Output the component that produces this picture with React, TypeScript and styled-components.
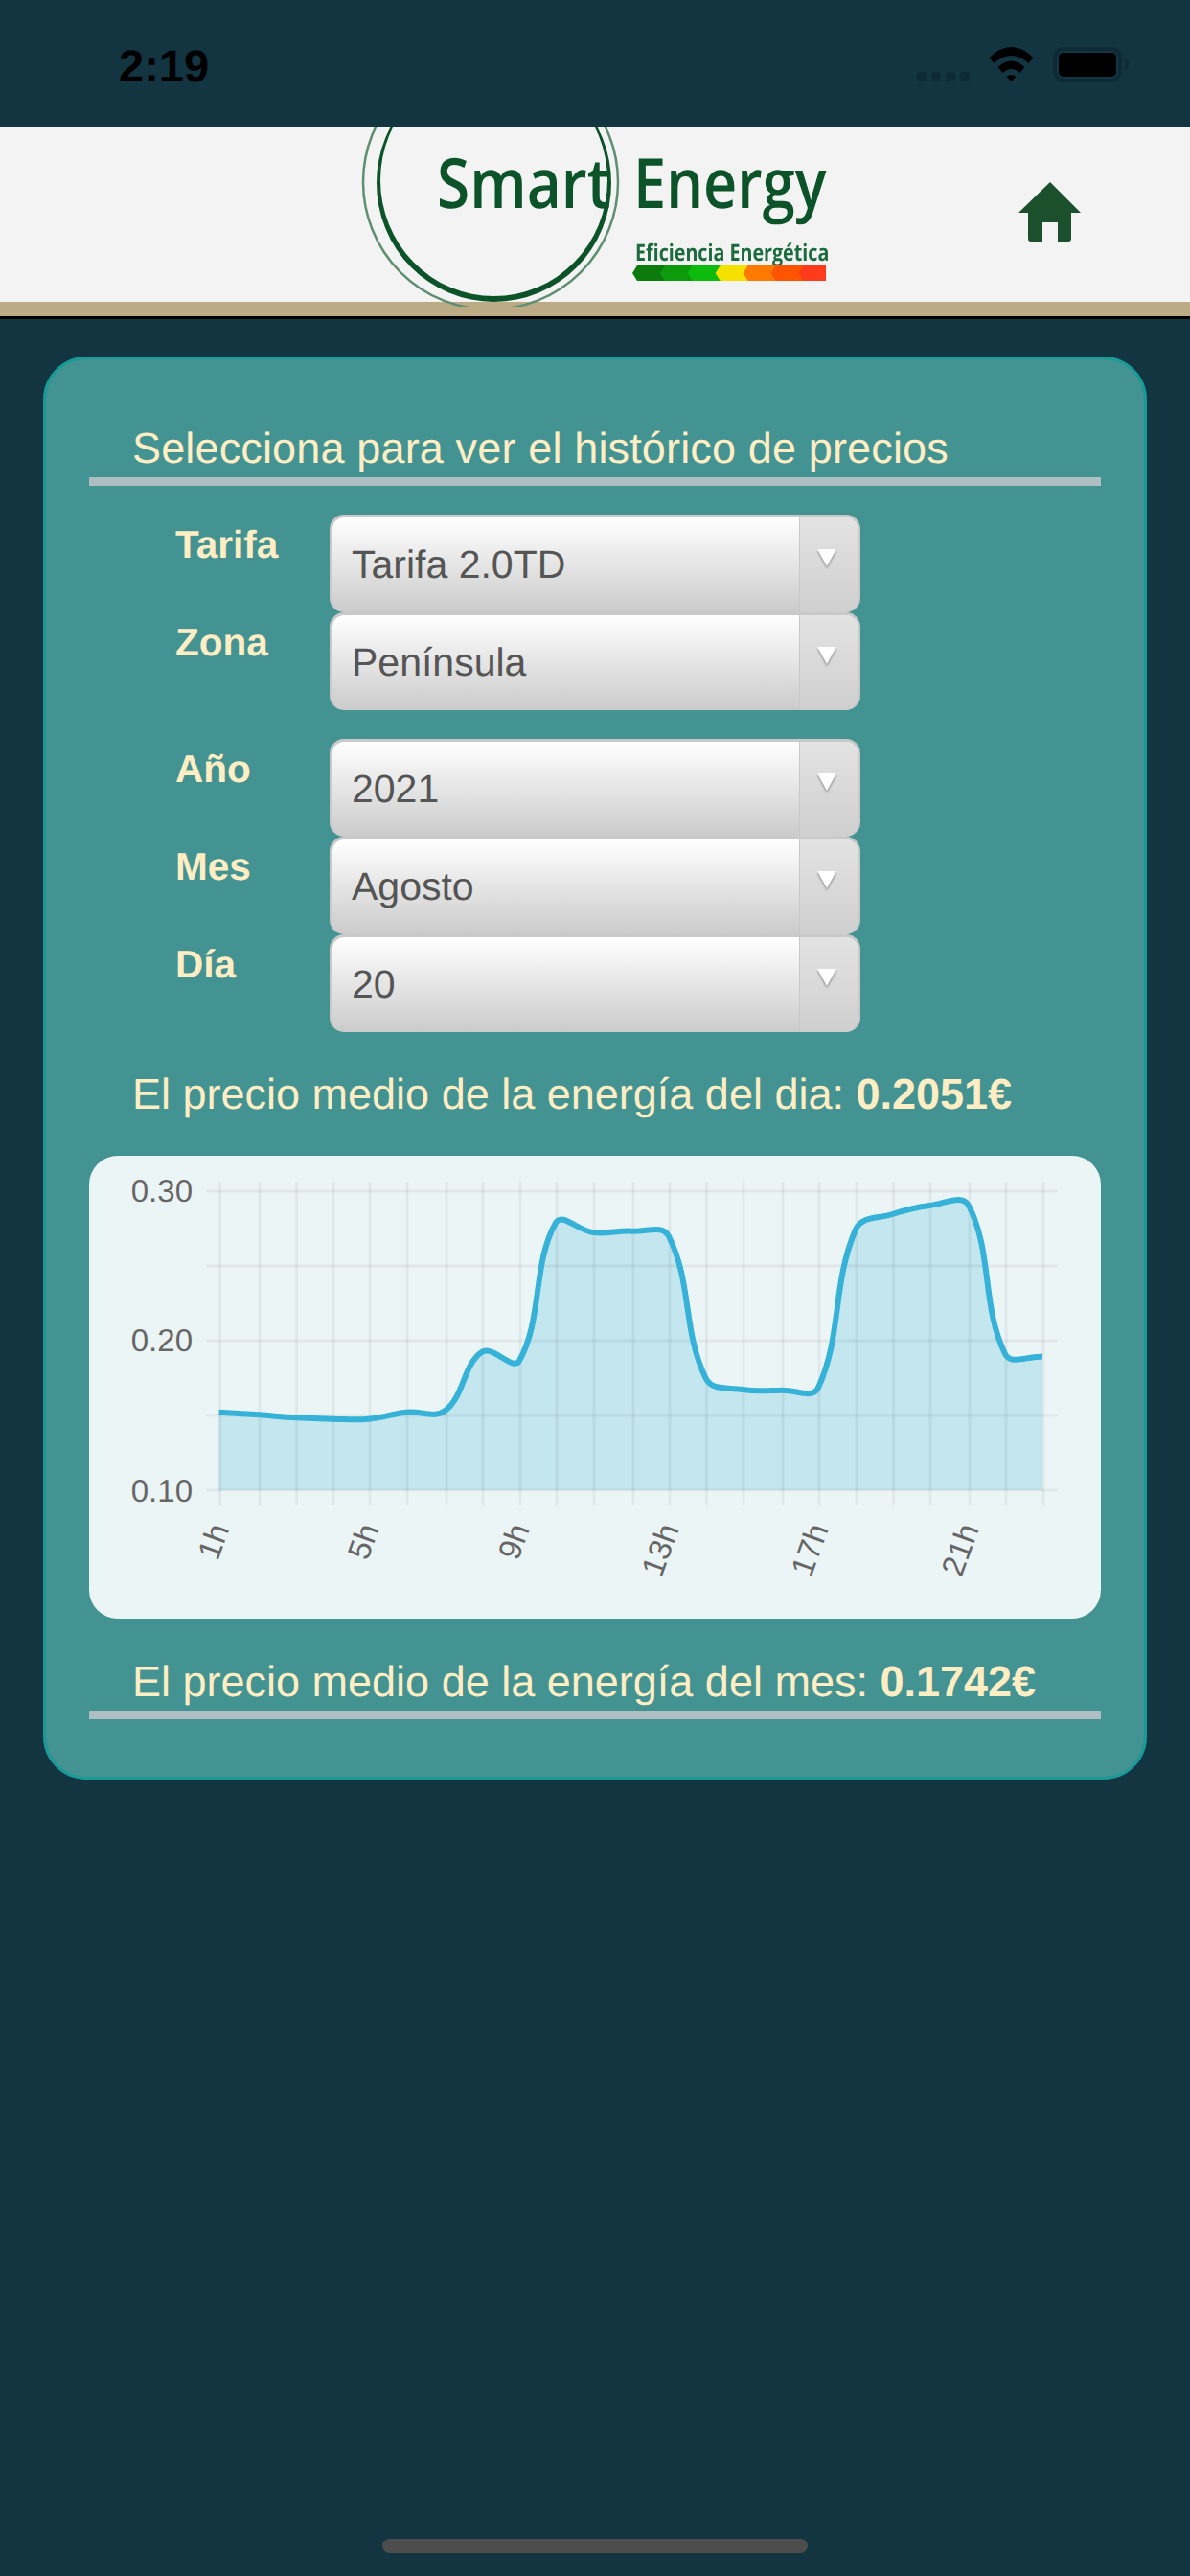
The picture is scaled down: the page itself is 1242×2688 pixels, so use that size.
import * as React from "react"
import styled, { createGlobalStyle } from "styled-components"

const GlobalStyle = createGlobalStyle`
  html, body {
    margin: 0;
    padding: 0;
    background: #133441;
  }
  body {
    font-family: "Liberation Sans", Arial, sans-serif;
    text-rendering: geometricPrecision;
  }
  * {
    box-sizing: border-box;
  }
`

const firstGroup = [
  { label: "Tarifa", value: "Tarifa 2.0TD" },
  { label: "Zona", value: "Península" },
]
const secondGroup = [
  { label: "Año", value: "2021" },
  { label: "Mes", value: "Agosto" },
  { label: "Día", value: "20" },
]

const energyColors = ["#0a7a0a", "#0b9a0b", "#07bb07", "#f5e000", "#ff7a00", "#ff5500", "#ff3a1c"]

// chart geometry, in page pixels (the svg viewBox uses the same numbers)
const gridX = [229.6, 271, 309.6, 348, 386, 425, 466, 504, 543, 581, 620, 661, 699, 737.5, 776, 817, 855, 894, 932.5, 971, 1012, 1050, 1089]
const gridY = [1243, 1321, 1399, 1477, 1555]
const plotY = [1473.7, 1476.3, 1479.3, 1480.7, 1480.7, 1473.7, 1471.7, 1410.7, 1420, 1276, 1286, 1284.7, 1290, 1438, 1450, 1450.7, 1448, 1283, 1267, 1258, 1258, 1412.7, 1415.7]
const yTicks = [
  { label: "0.30", y: 1254 },
  { label: "0.20", y: 1410 },
  { label: "0.10", y: 1567 },
]
const xTicks = [
  { label: "1h", index: 0 },
  { label: "5h", index: 4 },
  { label: "9h", index: 8 },
  { label: "13h", index: 12 },
  { label: "17h", index: 16 },
  { label: "21h", index: 20 },
]

const points = plotY.map((y, i) => ({ x: gridX[i] - 1, y }))

// same spline as chart.js line charts
function linePath(pts: { x: number; y: number }[], tension = 0.4) {
  const ctrl = pts.map((p, i) => {
    const prev = pts[i - 1] || p
    const next = pts[i + 1] || p
    const d01 = Math.hypot(p.x - prev.x, p.y - prev.y)
    const d12 = Math.hypot(next.x - p.x, next.y - p.y)
    const total = d01 + d12 || 1
    const fa = (tension * d01) / total
    const fb = (tension * d12) / total
    return {
      inX: p.x - fa * (next.x - prev.x),
      inY: p.y - fa * (next.y - prev.y),
      outX: p.x + fb * (next.x - prev.x),
      outY: p.y + fb * (next.y - prev.y),
    }
  })
  let d = `M${pts[0].x} ${pts[0].y}`
  for (let i = 1; i < pts.length; i++) {
    d += ` C${ctrl[i - 1].outX} ${ctrl[i - 1].outY} ${ctrl[i].inX} ${ctrl[i].inY} ${pts[i].x} ${pts[i].y}`
  }
  return d
}

function StatusIcons() {
  return (
    <svg width="222" height="37" viewBox="957 49 222 37">
      {[957, 972, 987, 1002].map((x) => (
        <rect key={x} x={x} y="75" width="10" height="10" rx="3.5" fill="#0e2a36" />
      ))}
      <g transform="translate(1031.5 49)" fill="#000">
        <path d="M1 11 Q24 -11 47 11 L42 17 Q24 1 6 17 Z" />
        <path d="M10 21 Q24 8 38 21 L33 27 Q24 19 15 27 Z" />
        <path d="M19 31 Q24 27 29 31 L24 36 Z" />
      </g>
      <rect x="1101" y="51" width="68" height="33" rx="9" fill="none" stroke="#0e2a36" strokeWidth="4" />
      <rect x="1105" y="55" width="60" height="25" rx="5" fill="#000" />
      <path d="M1174 61 Q1178 63 1178 67.5 Q1178 72 1174 74 Z" fill="#0e2a36" />
    </svg>
  )
}

function Logo() {
  return (
    <LogoMark viewBox="370 132 520 188">
      <defs>
        <filter id="soft" x="-5%" y="-5%" width="110%" height="110%">
          <feGaussianBlur stdDeviation="0.7" />
        </filter>
      </defs>
      <g filter="url(#soft)">
        <circle cx="512" cy="190" r="133" fill="none" stroke="#5f8f72" strokeWidth="2.5" />
        <path
          fillRule="evenodd"
          fill="#0b5229"
          d="M393 191 a122.5 124 0 1 0 245 0 a122.5 124 0 1 0 -245 0 Z M397 188 a118.5 121 0 1 0 237 0 a118.5 121 0 1 0 -237 0 Z"
        />
        <LogoText transform="translate(456 217) scale(0.865 1)" fontSize="72">
          Smart
        </LogoText>
        <LogoText transform="translate(661 217) scale(0.85 1)" fontSize="72">
          Energy
        </LogoText>
        <LogoSmallText transform="translate(663 272) scale(0.82 1)" fontSize="24">
          Eficiencia Energética
        </LogoSmallText>
        {energyColors.map((color, i) => {
          const left = 660 + i * 28.9
          return (
            <polygon
              key={color}
              fill={color}
              points={`${left + 5},277 862,277 862,293 ${left + 5},293 ${left},285`}
            />
          )
        })}
      </g>
    </LogoMark>
  )
}

function HomeIcon() {
  return (
    <svg width="65" height="62" viewBox="1063 190 65 62">
      <path
        fill="#1c4f2b"
        d="M1096 190 L1128 222 L1118 222 L1118 249 Q1118 252 1115 252 L1104 252 L1104 232 L1088 232 L1088 252 L1076 252 Q1073 252 1073 249 L1073 222 L1063 222 Z"
      />
    </svg>
  )
}

function Chart() {
  const line = linePath(points)
  const first = points[0]
  const last = points[points.length - 1]
  return (
    <ChartCard>
      <svg width="1056" height="483" viewBox="93 1206 1056 483" style={{ display: "block" }}>
        <path d={`${line} L${last.x} 1555 L${first.x} 1555 Z`} fill="#36b2d8" fillOpacity="0.22" />
        {gridY.map((y) => (
          <line key={y} x1="215" x2="1104" y1={y} y2={y} stroke="#000" strokeOpacity="0.05" strokeWidth="3" />
        ))}
        {gridX.map((x) => (
          <line key={x} x1={x} x2={x} y1="1233" y2="1570" stroke="#000" strokeOpacity="0.05" strokeWidth="3" />
        ))}
        <path d={line} fill="none" stroke="#36b2d8" strokeWidth="6" />
        {yTicks.map((t) => (
          <TickText key={t.label} x="201" y={t.y} textAnchor="end">
            {t.label}
          </TickText>
        ))}
        {xTicks.map((t) => {
          const x = gridX[t.index] + 10
          return (
            <TickText key={t.label} x={x} y="1595" textAnchor="end" transform={`rotate(-70 ${x} 1595)`}>
              {t.label}
            </TickText>
          )
        })}
      </svg>
    </ChartCard>
  )
}

function SelectRow({ label, value }: { label: string; value: string }) {
  return (
    <Row>
      <RowLabel>{label}</RowLabel>
      <SelectBox>
        <SelectValue>{value}</SelectValue>
        <ArrowBox>
          <Arrow />
        </ArrowBox>
      </SelectBox>
    </Row>
  )
}

export default function App() {
  return (
    <Page>
      <GlobalStyle />
      <StatusBar>
        <Clock>2:19</Clock>
        <StatusIcons />
      </StatusBar>
      <Header>
        <Logo />
        <HomeIcon />
      </Header>
      <Panel>
        <SectionTitle>Selecciona para ver el histórico de precios</SectionTitle>
        <Group>
          {firstGroup.map((row) => (
            <SelectRow key={row.label} {...row} />
          ))}
        </Group>
        <Group>
          {secondGroup.map((row) => (
            <SelectRow key={row.label} {...row} />
          ))}
        </Group>
        <PriceLine>
          El precio medio de la energía del dia: <b>0.2051€</b>
        </PriceLine>
        <Chart />
        <FooterLine>
          El precio medio de la energía del mes: <b>0.1742€</b>
        </FooterLine>
      </Panel>
      <HomeIndicator />
    </Page>
  )
}

const Page = styled.div`
  width: 1242px;
  height: 2688px;
  display: flex;
  flex-direction: column;
  background: #133441;
`

const StatusBar = styled.div`
  height: 132px;
  padding: 49px 63px 0 124px;
  display: flex;
  justify-content: space-between;
  align-items: flex-start;
`

const Clock = styled.div`
  font-size: 47px;
  font-weight: bold;
  line-height: 40px;
  color: #000;
`

const Header = styled.div`
  position: relative;
  height: 201px;
  padding: 58px 114px 0 0;
  display: flex;
  justify-content: flex-end;
  align-items: flex-start;
  background: #f3f3f3;
  border-bottom: 3px solid #000;
  box-shadow: inset 0 -15px 0 #bcab84;
`

const LogoMark = styled.svg`
  position: absolute;
  left: 370px;
  top: 0;
  width: 520px;
  height: 188px;
`

const LogoText = styled.text`
  font-family: "Open Sans", sans-serif;
  font-weight: 600;
  fill: #0b5229;
`

const LogoSmallText = styled.text`
  font-family: "Open Sans", sans-serif;
  font-weight: 700;
  fill: #1a6b3c;
`

const Panel = styled.div`
  margin: 39px 45px 0;
  padding: 66px 45px 60px;
  background: #449393;
  border: 3px solid #1a9a96;
  border-radius: 45px;
  color: #ffedc4;
`

const SectionTitle = styled.div`
  padding: 0 0 3px 45px;
  font-size: 45px;
  line-height: 54px;
  letter-spacing: 0.15px;
  border-bottom: 9px solid #adbfc2;
`

const Group = styled.div`
  margin-top: 30px;
`

const Row = styled.div`
  height: 102px;
  padding-left: 90px;
  display: flex;
  align-items: flex-start;
`

const RowLabel = styled.div`
  width: 161px;
  padding-top: 7px;
  font-size: 40.5px;
  line-height: 48px;
  font-weight: bold;
`

const SelectBox = styled.div`
  width: 554px;
  height: 102px;
  display: flex;
  border: 3px solid #c9c9c9;
  border-bottom: none;
  border-radius: 15px;
  overflow: hidden;
  background: linear-gradient(#ffffff, #cbcbcb);
`

const SelectValue = styled.div`
  flex: 1;
  padding-left: 20px;
  font-size: 41px;
  line-height: 99px;
  color: #555;
`

const ArrowBox = styled.div`
  width: 61px;
  padding: 33px 5px 0 0;
  display: flex;
  justify-content: center;
  align-items: flex-start;
  border-left: 1.5px solid #c8c8c8;
  background: linear-gradient(#e3e3e3, #cfcfcf);
`

const Arrow = styled.div`
  width: 0;
  height: 0;
  border-left: 10.5px solid transparent;
  border-right: 10.5px solid transparent;
  border-top: 18px solid #fff;
  filter: drop-shadow(0 2px 1px rgba(0, 0, 0, 0.35));
`

const PriceLine = styled.div`
  margin-top: 38px;
  padding-left: 45px;
  font-size: 45px;
  line-height: 54px;
`

const ChartCard = styled.div`
  margin-top: 37px;
  height: 483px;
  background: #ecf5f6;
  border-radius: 30px;
  overflow: hidden;
`

const TickText = styled.text`
  font-family: "Liberation Sans", Arial, sans-serif;
  font-size: 33px;
  fill: #666;
`

const FooterLine = styled.div`
  margin-top: 39px;
  padding: 0 0 3px 45px;
  font-size: 45px;
  line-height: 54px;
  border-bottom: 9px solid #adbfc2;
`

const HomeIndicator = styled.div`
  width: 444px;
  height: 15px;
  margin: auto auto 24px;
  border-radius: 8px;
  background: #4d4d4d;
`
